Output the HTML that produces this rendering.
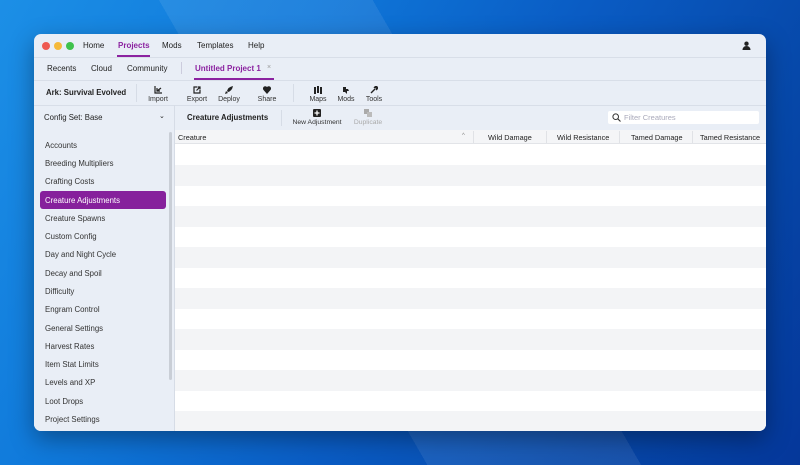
<!DOCTYPE html><html><head><style>
*{margin:0;padding:0;box-sizing:border-box}
body{width:800px;height:465px;overflow:hidden;position:relative;font-family:"Liberation Sans",sans-serif;font-size:8px;color:#222;
background:linear-gradient(120deg,#1c8fe6 0%,#0f78da 30%,#0a5cc4 55%,#0647a8 80%,#05379a 100%)}
.bg1{position:absolute;left:0;top:0;width:800px;height:465px;background:linear-gradient(60deg,transparent 40%,rgba(255,255,255,.08) 40%,rgba(255,255,255,.08) 60%,transparent 60%)}
.win{position:absolute;left:34px;top:34px;width:732px;height:397px;border-radius:7px;background:#e9eef6;overflow:hidden;box-shadow:0 8px 24px rgba(0,0,0,.35)}
.a{position:absolute;white-space:nowrap}
.line{position:absolute;left:0;width:732px;height:1px;background:#d8dee8}
.dot{position:absolute;top:8px;width:8px;height:8px;border-radius:50%}
.purple{color:#8b22a0}
.tb{position:absolute;text-align:center;font-size:7px;color:#333;width:30px}
.tb svg{display:block;margin:0 auto 2px}
.side{position:absolute;left:0;top:96px;width:141px;height:301px;background:#e9eef6;border-right:1px solid #d6dce6}
.si{position:absolute;left:11px;font-size:7.8px;color:#333}
.main{position:absolute;left:141px;top:96px;width:591px;height:301px;background:#fff}
.row{position:absolute;left:0;width:591px;height:20.5px;background:#f3f4f6}
</style></head><body><div class="bg1"></div>
<div class="win">
<div class="dot" style="left:8px;background:#ee5a52"></div>
<div class="dot" style="left:20px;background:#f5b93a"></div>
<div class="dot" style="left:32px;background:#3fc24c"></div>
<div class="a" style="left:49px;top:7px">Home</div>
<div class="a purple" style="left:84px;top:7px;font-weight:bold">Projects</div>
<div style="position:absolute;left:83px;top:21px;width:33px;height:1.5px;background:#8b22a0"></div>
<div class="a" style="left:128px;top:7px">Mods</div>
<div class="a" style="left:163px;top:7px">Templates</div>
<div class="a" style="left:214px;top:7px">Help</div>
<svg class="a" style="left:708px;top:7px" width="9" height="9" viewBox="0 0 10 10"><circle cx="5" cy="3" r="2.4" fill="#222"/><path d="M0.5 10 Q1 5.5 5 5.5 Q9 5.5 9.5 10Z" fill="#222"/></svg>
<div class="line" style="top:23px"></div>
<div class="a" style="left:13px;top:30px">Recents</div>
<div class="a" style="left:57px;top:30px">Cloud</div>
<div class="a" style="left:93px;top:30px">Community</div>
<div style="position:absolute;left:147px;top:28px;width:1px;height:12px;background:#ccd"></div>
<div class="a purple" style="left:161px;top:30px;font-weight:bold">Untitled Project 1</div>
<div class="a" style="left:233px;top:30px;color:#999;font-size:7px">×</div>
<div style="position:absolute;left:160px;top:44px;width:80px;height:1.5px;background:#8b22a0"></div>
<div class="line" style="top:46px"></div>
<div class="a" style="left:12px;top:54px;font-weight:bold;font-size:7.8px">Ark: Survival Evolved</div>
<div style="position:absolute;left:102px;top:50px;width:1px;height:18px;background:#d6dce6"></div>
<div style="position:absolute;left:259px;top:50px;width:1px;height:18px;background:#d6dce6"></div>
<div class="tb" style="left:109px;top:52px"><svg width="8" height="8" viewBox="0 0 8 8"><path d="M1 0v7h7" stroke="#222" fill="none" stroke-width="1.2"/><path d="M3 5l4-3M3 2v3h3" stroke="#222" fill="none" stroke-width="1.2"/></svg>Import</div>
<div class="tb" style="left:148px;top:52px"><svg width="8" height="8" viewBox="0 0 8 8"><path d="M4 1H1v6h6V4" stroke="#222" fill="none" stroke-width="1.2"/><path d="M3.5 4.5L7 1M4.5 1H7v2.5" stroke="#222" fill="none" stroke-width="1.2"/></svg>Export</div>
<div class="tb" style="left:180px;top:52px"><svg width="8" height="8" viewBox="0 0 8 8"><path d="M8 0Q3 1 2 5l1 1Q7 5 8 0ZM1 5L0 8l3-1Z" fill="#222"/></svg>Deploy</div>
<div class="tb" style="left:218px;top:52px"><svg width="8" height="8" viewBox="0 0 8 8"><path d="M4 8L0.5 4A2 2 0 0 1 4 1A2 2 0 0 1 7.5 4Z" fill="#222"/></svg>Share</div>
<div class="tb" style="left:269px;top:52px"><svg width="8" height="8" viewBox="0 0 8 8"><path d="M0 1h2v7H0zM3 0h2v7H3zM6 1h2v7H6z" fill="#222"/></svg>Maps</div>
<div class="tb" style="left:297px;top:52px"><svg width="8" height="8" viewBox="0 0 8 8"><path d="M1 1h3v2h2l1 2H5v3L3 6H1z" fill="#222"/></svg>Mods</div>
<div class="tb" style="left:325px;top:52px"><svg width="8" height="8" viewBox="0 0 8 8"><path d="M1 7L5 3M5 1l2 2M4 2l2-2l2 2-2 2" stroke="#222" stroke-width="1.4" fill="none"/></svg>Tools</div>
<div class="line" style="top:71px"></div>
<div class="a" style="left:10px;top:79px;font-size:7.8px">Config Set: Base</div>
<div class="a" style="left:125px;top:78px;font-size:7px">⌄</div>
<div style="position:absolute;left:140px;top:71px;width:1px;height:25px;background:#d6dce6"></div>
<div class="a" style="left:153px;top:79px;font-weight:bold;font-size:7.8px">Creature Adjustments</div>
<div style="position:absolute;left:247px;top:76px;width:1px;height:16px;background:#d6dce6"></div>
<div class="tb" style="left:257px;top:75px;width:52px;font-size:6.8px"><svg width="8" height="8" viewBox="0 0 8 8"><rect width="8" height="8" rx="1" fill="#222"/><path d="M4 1.5v5M1.5 4h5" stroke="#fff" stroke-width="1.3"/></svg>New Adjustment</div>
<div class="tb" style="left:317px;top:75px;width:34px;font-size:6.8px;color:#aaa"><svg width="8" height="8" viewBox="0 0 8 8"><rect x="0" y="0" width="5" height="5" fill="#aaa"/><rect x="3" y="3" width="5" height="5" fill="#bbb"/></svg>Duplicate</div>
<div style="position:absolute;left:574px;top:77px;width:151px;height:13px;background:#fff;border-radius:2px"></div>
<svg class="a" style="left:578px;top:79px" width="9" height="9" viewBox="0 0 9 9"><circle cx="3.7" cy="3.7" r="2.8" stroke="#333" fill="none" stroke-width="1"/><path d="M5.8 5.8L8.5 8.5" stroke="#333" stroke-width="1.1"/></svg>
<div class="a" style="left:590px;top:79px;color:#aab;font-size:7.5px">Filter Creatures</div>
<div class="side">
<div class="si" style="top:11px">Accounts</div>
<div class="si" style="top:29px">Breeding Multipliers</div>
<div class="si" style="top:47px">Crafting Costs</div>
<div style="position:absolute;left:6px;top:61px;width:126px;height:18px;background:#86209c;border-radius:3px"></div>
<div class="si" style="top:66px;color:#fff">Creature Adjustments</div>
<div class="si" style="top:84px">Creature Spawns</div>
<div class="si" style="top:102px">Custom Config</div>
<div class="si" style="top:120px">Day and Night Cycle</div>
<div class="si" style="top:139px">Decay and Spoil</div>
<div class="si" style="top:157px">Difficulty</div>
<div class="si" style="top:175px">Engram Control</div>
<div class="si" style="top:194px">General Settings</div>
<div class="si" style="top:212px">Harvest Rates</div>
<div class="si" style="top:230px">Item Stat Limits</div>
<div class="si" style="top:248px">Levels and XP</div>
<div class="si" style="top:267px">Loot Drops</div>
<div class="si" style="top:285px">Project Settings</div>
<div style="position:absolute;left:135px;top:2px;width:3px;height:248px;background:#c9ced6;border-radius:2px"></div>
</div>
<div class="main">
<div style="position:absolute;left:0;top:0;width:591px;height:14px;background:#f4f5f7;border-bottom:1px solid #e2e4e8"></div>
<div class="a" style="left:3px;top:3px;font-size:7.3px">Creature</div>
<div class="a" style="left:287px;top:3px;font-size:6px;color:#888">^</div>
<div style="position:absolute;left:298px;top:1px;width:1px;height:12px;background:#e0e2e6"></div>
<div style="position:absolute;left:371px;top:1px;width:1px;height:12px;background:#e0e2e6"></div>
<div style="position:absolute;left:444px;top:1px;width:1px;height:12px;background:#e0e2e6"></div>
<div style="position:absolute;left:517px;top:1px;width:1px;height:12px;background:#e0e2e6"></div>
<div class="a" style="left:313px;top:3px;font-size:7.3px">Wild Damage</div>
<div class="a" style="left:382px;top:3px;font-size:7.3px">Wild Resistance</div>
<div class="a" style="left:456px;top:3px;font-size:7.3px">Tamed Damage</div>
<div class="a" style="left:525px;top:3px;font-size:7.3px">Tamed Resistance</div>
<div class="row" style="top:35px"></div>
<div class="row" style="top:76px"></div>
<div class="row" style="top:117px"></div>
<div class="row" style="top:158px"></div>
<div class="row" style="top:199px"></div>
<div class="row" style="top:240px"></div>
<div class="row" style="top:281px"></div>
</div>
</div>
</body></html>
